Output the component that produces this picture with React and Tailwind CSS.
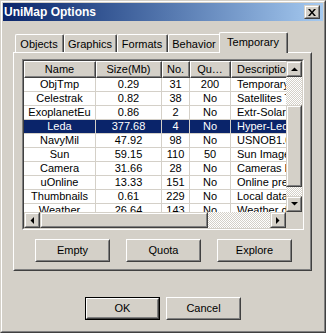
import React from 'react';

const rows = [
  ['ObjTmp', '0.29', '31', '200', 'Temporary objects'],
  ['Celestrak', '0.82', '38', 'No', 'Satellites TLE'],
  ['ExoplanetEu', '0.86', '2', 'No', 'Extr-Solar Planets'],
  ['Leda', '377.68', '4', 'No', 'Hyper-Leda'],
  ['NavyMil', '47.92', '98', 'No', 'USNOB1.0 cache'],
  ['Sun', '59.15', '110', '50', 'Sun Images'],
  ['Camera', '31.66', '28', 'No', 'Cameras by site'],
  ['uOnline', '13.33', '151', 'No', 'Online previews'],
  ['Thumbnails', '0.61', '229', 'No', 'Local data cache'],
  ['Weather', '26.64', '143', 'No', 'Weather data'],
];

const cols = ['w-[72px]', 'w-[66px]', 'w-[28px]', 'w-[41px]', 'w-[80px]'];
const headers = ['Name', 'Size(Mb)', 'No.', 'Qu…', 'Description'];

// raised bevel used by scrollbar parts and the caption button
function Bevel({ className = '', children }) {
  return (
    <div className={`shrink-0 border border-t-[#d4d0c8] border-l-[#d4d0c8] border-r-[#404040] border-b-[#404040] ${className}`}>
      <div className="w-full h-full bg-[#d4d0c8] border border-t-white border-l-white border-r-[#808080] border-b-[#808080] flex items-center justify-center">
        {children}
      </div>
    </div>
  );
}

function Button({ label, isDefault }) {
  const face = (
    <div className="w-full h-full border border-t-white border-l-white border-r-[#404040] border-b-[#404040]">
      <div className="w-full h-full border border-t-[#d4d0c8] border-l-[#d4d0c8] border-r-[#808080] border-b-[#808080] flex items-center justify-center">
        {label}
      </div>
    </div>
  );
  if (isDefault) {
    return <div className="w-[75px] h-[23px] border border-black">{face}</div>;
  }
  return <div className="w-[75px] h-[23px]">{face}</div>;
}

const Checker = ({ className = '' }) => (
  <div className={`bg-[repeating-conic-gradient(#ffffff_0_25%,#d4d0c8_0_50%)] bg-size-[2px_2px] ${className}`} />
);

const Arrow = ({ dir }) => {
  const pts = {
    up: '0,4 7,4 3.5,0.5',
    down: '0,0 7,0 3.5,3.5',
    left: '4,0 4,7 0.5,3.5',
    right: '0,0 0,7 3.5,3.5',
  }[dir];
  const vertical = dir === 'up' || dir === 'down';
  return (
    <svg width={vertical ? 7 : 4} height={vertical ? 4 : 7} viewBox={vertical ? '0 0 7 4' : '0 0 4 7'}>
      <polygon points={pts} fill="black" />
    </svg>
  );
};

function Tab({ label, selected, w }) {
  if (selected) {
    return (
      <div className={`relative z-10 -ml-[2px] -mb-px h-[21px] ${w} bg-[#d4d0c8] border-l border-t border-white border-r border-r-[#404040] rounded-t-[2px]`}>
        <div className="h-full border-r border-[#808080] flex justify-center pt-[3px]">{label}</div>
      </div>
    );
  }
  return (
    <div className={`h-[18px] ${w} border-l border-t border-white border-r border-r-[#404040] rounded-t-[2px]`}>
      <div className="h-full border-r border-[#808080] flex justify-center pt-[3px]">{label}</div>
    </div>
  );
}

export default function App() {
  return (
    <div className="w-[326px] h-[333px] bg-[#d4d0c8] text-black text-[11px] leading-[13px] font-['Liberation_Sans',Arial,sans-serif] border border-t-[#d4d0c8] border-l-[#d4d0c8] border-r-[#404040] border-b-[#404040]">
      <div className="h-full border border-t-white border-l-white border-r-[#808080] border-b-[#808080] p-px flex flex-col">
        {/* caption */}
        <div className="h-[18px] shrink-0 flex items-center bg-linear-to-r from-[#0a246a] to-[#a6caf0]">
          <span className="pl-[1px] text-white font-bold text-[12px]">UniMap Options</span>
          <Bevel className="ml-auto mr-[3px] w-[16px] h-[14px]">
            <svg width="8" height="7" viewBox="0 0 8 7">
              <path d="M0 0h2l2 2.5L6 0h2L5 3.5 8 7H6L4 4.5 2 7H0l3-3.5z" fill="black" />
            </svg>
          </Bevel>
        </div>

        <div className="mt-[11px] ml-[10px] w-[299px]">
          {/* tabs */}
          <div className="h-[20px] flex items-end pl-[2px]">
            <Tab label="Objects" w="w-[49px]" />
            <Tab label="Graphics" w="w-[53px]" />
            <Tab label="Formats" w="w-[51px]" />
            <Tab label="Behavior" w="w-[53px]" />
            <Tab label="Temporary" w="w-[69px]" selected />
          </div>

          {/* tab page */}
          <div className="h-[219px] border border-t-white border-l-white border-r-[#404040] border-b-[#404040]">
            <div className="h-full border border-t-[#d4d0c8] border-l-[#d4d0c8] border-r-[#808080] border-b-[#808080] pl-[7px] pt-[5px]">
              {/* list view */}
              <div className="w-[282px] h-[171px] border border-t-[#808080] border-l-[#808080] border-r-white border-b-white">
                <div className="w-full h-full border border-t-[#404040] border-l-[#404040] border-r-[#d4d0c8] border-b-[#d4d0c8] bg-white flex flex-col">
                  <div className="h-[151px] flex">
                    <div className="w-[262px] overflow-hidden">
                      <div className="flex h-[17px] w-max">
                        {headers.map((h, i) => (
                          <div key={h} className={`${cols[i]} shrink-0 bg-[#d4d0c8] border border-t-white border-l-white border-r-[#404040] border-b-[#404040]`}>
                            <div className={`h-full border-r border-b border-[#808080] flex items-center ${i === 4 ? 'pl-[5px]' : 'justify-center'} whitespace-nowrap`}>
                              {h}
                            </div>
                          </div>
                        ))}
                      </div>
                      {rows.map((r) => {
                        const sel = r[0] === 'Leda';
                        return (
                          <div key={r[0]} className={`flex h-[14px] w-max ${sel ? 'bg-[#0a246a] text-white' : ''}`}>
                            {r.map((c, i) => (
                              <div key={i} className={`${cols[i]} shrink-0 border-r border-b border-[#d4d0c8] flex items-center whitespace-nowrap overflow-hidden ${i === 4 ? 'pl-[6px]' : 'justify-center'}`}>
                                {c}
                              </div>
                            ))}
                          </div>
                        );
                      })}
                    </div>
                    {/* vertical scrollbar */}
                    <div className="w-[16px] flex flex-col">
                      <Bevel className="w-[16px] h-[16px]"><Arrow dir="up" /></Bevel>
                      <Checker className="h-[28px]" />
                      <Bevel className="w-[16px] h-[82px]" />
                      <Checker className="flex-1" />
                      <Bevel className="w-[16px] h-[16px]"><Arrow dir="down" /></Bevel>
                    </div>
                  </div>
                  {/* horizontal scrollbar */}
                  <div className="h-[16px] flex">
                    <Bevel className="w-[16px] h-[16px]"><Arrow dir="left" /></Bevel>
                    <Bevel className="w-[168px] h-[16px]" />
                    <Checker className="w-[62px] h-[16px]" />
                    <Bevel className="w-[16px] h-[16px]"><Arrow dir="right" /></Bevel>
                    <div className="w-[16px] h-[16px] bg-[#d4d0c8]" />
                  </div>
                </div>
              </div>

              <div className="mt-[9px] pl-[13px] flex gap-[16px]">
                <Button label="Empty" />
                <Button label="Quota" />
                <Button label="Explore" />
              </div>
            </div>
          </div>
        </div>

        <div className="mt-[26px] flex justify-center gap-[6px]">
          <Button label="OK" isDefault />
          <Button label="Cancel" />
        </div>
      </div>
    </div>
  );
}
